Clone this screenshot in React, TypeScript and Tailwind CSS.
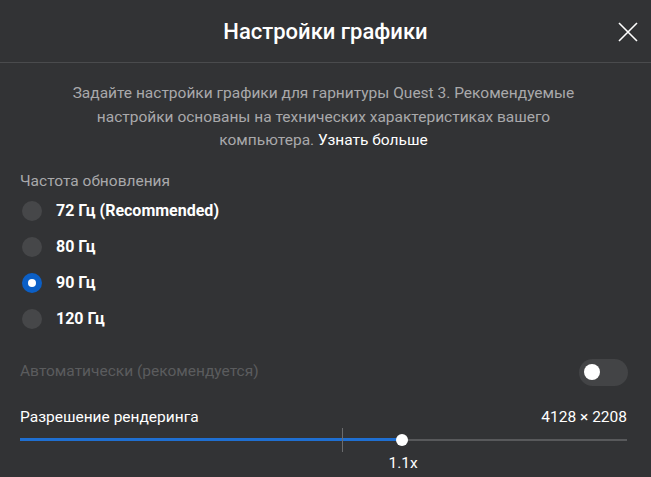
import React from 'react';

const rates = [
  { label: '72 Гц (Recommended)', checked: false },
  { label: '80 Гц', checked: false },
  { label: '90 Гц', checked: true },
  { label: '120 Гц', checked: false },
];

export default function App() {
  return (
    <div
      className="w-[651px] h-[477px] bg-[#323335] text-white overflow-hidden"
      style={{ fontFamily: 'Roboto, "Noto Sans", sans-serif' }}
    >
      {/* Header */}
      <div className="relative h-[63px] flex items-center justify-center border-b border-[#4a4b4d]">
        <h1 className="text-[22px] font-medium">Настройки графики</h1>
        <button className="absolute right-[13px] top-[22px] w-5 h-5 flex items-center justify-center">
          <svg width="20" height="20" viewBox="0 0 20 20" fill="none" stroke="#fff" strokeWidth="1.6">
            <path d="M1 1 L19 19 M19 1 L1 19" />
          </svg>
        </button>
      </div>

      <div className="pl-5 pr-6">
        {/* Description */}
        <p className="mt-[19px] text-center text-[15.5px] leading-[23.5px] text-[#a9a9ab]">
          Задайте настройки графики для гарнитуры Quest 3. Рекомендуемые
          <br />
          настройки основаны на технических характеристиках вашего
          <br />
          компьютера. <span className="text-white">Узнать больше</span>
        </p>

        {/* Refresh rate */}
        <div className="mt-[18px] text-[15.5px] leading-5 text-[#a9a9ab]">Частота обновления</div>
        <div className="mt-[2px] flex flex-col">
          {rates.map((r) => (
            <div key={r.label} className="h-9 flex items-center gap-[14px]">
              {r.checked ? (
                <span className="w-5 h-5 ml-[2px] rounded-full bg-[#0b5fc6] flex items-center justify-center">
                  <span className="w-2 h-2 rounded-full bg-white" />
                </span>
              ) : (
                <span className="w-5 h-5 ml-[2px] rounded-full bg-[#464749]" />
              )}
              <span className="text-[16px] font-bold">{r.label}</span>
            </div>
          ))}
        </div>

        {/* Auto */}
        <div className="mt-[22px] h-[27px] flex items-center justify-between">
          <span className="text-[15.5px] text-[#5b5c5e]">Автоматически (рекомендуется)</span>
          <span className="w-[49px] h-[27px] mr-[-1px] rounded-full bg-[#434446] flex items-center pl-[5px]">
            <span className="w-4 h-4 rounded-full bg-white" />
          </span>
        </div>

        {/* Resolution */}
        <div className="mt-[21px] flex items-center justify-between text-[15.5px] leading-5">
          <span>Разрешение рендеринга</span>
          <span>4128 × 2208</span>
        </div>
        <div className="relative mt-px h-6">
          <div className="absolute left-0 right-0 top-[11px] h-[2px] bg-[#58595b]" />
          <div className="absolute left-0 top-[10.5px] h-[3px] w-[62.9%] bg-[#1f6fd1]" />
          <div className="absolute left-[53%] top-0 w-px h-6 bg-[#6a6b6d]" />
          <div className="absolute left-[62.9%] top-[6px] w-3 h-3 -ml-[6px] rounded-full bg-white" />
        </div>
        <div className="relative mt-px h-5">
          <span className="absolute left-[63.1%] -translate-x-1/2 text-[15.5px] leading-5">1.1x</span>
        </div>
      </div>
    </div>
  );
}
